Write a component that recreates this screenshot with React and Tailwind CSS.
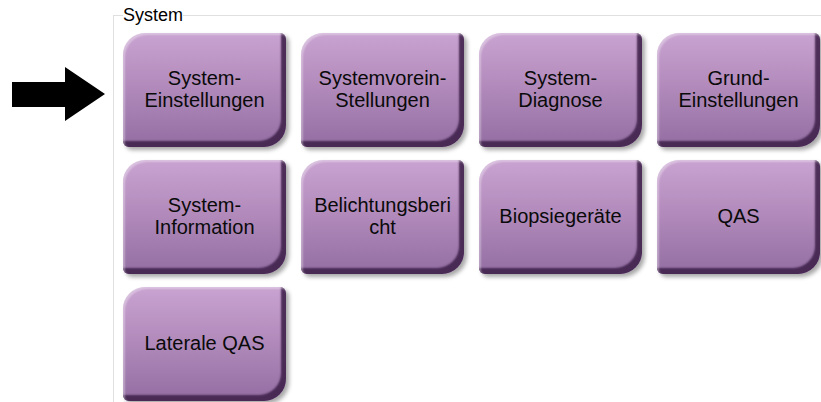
const buttons = [
  ['System-', 'Einstellungen'],
  ['Systemvorein-', 'Stellungen'],
  ['System-', 'Diagnose'],
  ['Grund-', 'Einstellungen'],
  ['System-', 'Information'],
  ['Belichtungsberi', 'cht'],
  ['Biopsiegeräte'],
  ['QAS'],
  ['Laterale QAS'],
];

function TileButton({ lines }) {
  return (
    <button
      type="button"
      className="flex h-[114px] w-[163px] flex-col items-center justify-center rounded-tl-[22px] rounded-tr-[6px] rounded-br-[22px] rounded-bl-[6px] bg-gradient-to-b from-[#c9a3d1] via-[#b089ba] to-[#936ea2] pb-[3px] text-[20px] leading-[22px] text-[#0a0a0a] shadow-[inset_2px_2px_2px_rgba(255,255,255,0.35),inset_-5px_-6px_2px_rgba(64,34,76,0.9),3px_3px_4px_rgba(0,0,0,0.35)]"
      style={{ fontFamily: '"Liberation Sans", Arial, sans-serif' }}
    >
      {lines.map((line, i) => (
        <span key={i}>{line}</span>
      ))}
    </button>
  );
}

export default function App() {
  return (
    <div
      className="flex h-[402px] w-[821px] overflow-hidden bg-white"
      style={{ fontFamily: '"Liberation Sans", Arial, sans-serif' }}
    >
      {/* pointer arrow */}
      <div className="w-[113px] shrink-0 pt-[67px]">
        <svg width="113" height="56" viewBox="0 67 113 56" className="block">
          <polygon points="12,82 65,82 65,67 105,94 65,121 65,107 12,107" fill="#000" />
        </svg>
      </div>

      <fieldset className="mt-[5px] min-w-0 flex-1 border-l border-t border-[#e0e0e0] pl-[9px]">
        <legend className="text-[18px] leading-[20px] text-black">System</legend>
        <div className="grid grid-cols-[repeat(4,163px)] gap-x-[15px] gap-y-[13px] pt-[8px]">
          {buttons.map((lines, i) => (
            <TileButton key={i} lines={lines} />
          ))}
        </div>
      </fieldset>
    </div>
  );
}
